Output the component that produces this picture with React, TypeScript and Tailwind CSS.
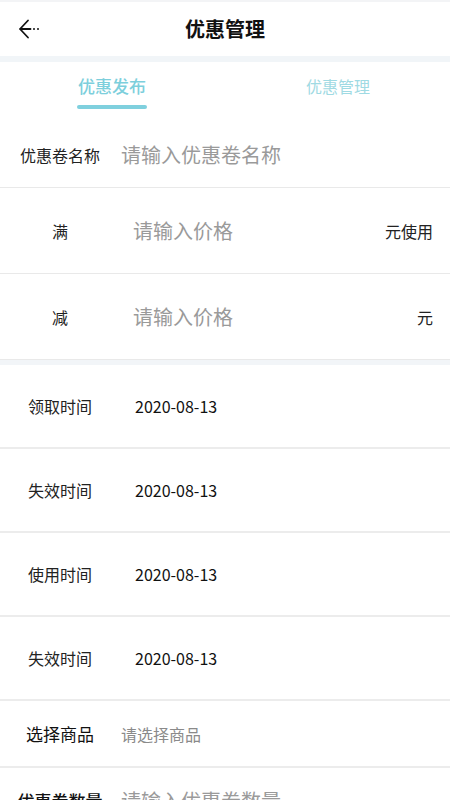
const font = { fontFamily: '"Noto Sans CJK SC", "Noto Sans", sans-serif' };

function BackArrow() {
  return (
    <svg width="24" height="22" viewBox="0 0 24 22" fill="none">
      <path d="M10 2.5L2 11L10 19.5" stroke="#111" strokeWidth="1.8" strokeLinecap="round" strokeLinejoin="round" />
      <path d="M2.5 11h10" stroke="#111" strokeWidth="1.8" strokeLinecap="round" />
      <circle cx="16" cy="11" r="1" fill="#111" />
      <circle cx="20" cy="11" r="1" fill="#111" />
    </svg>
  );
}

function InputRow({ label, placeholder, suffix, h, valueX }: { label: string; placeholder: string; suffix?: string; h: string; valueX: string }) {
  return (
    <div className={`flex items-center border-b border-[#e9e9e9] ${h}`}>
      <div className="w-[120px] text-center text-[16px] text-[#222]">{label}</div>
      <div className={`flex-1 text-[20px] text-[#9a9a9a] ${valueX}`}>{placeholder}</div>
      {suffix && <div className="pr-[17px] text-[16px] text-[#222]">{suffix}</div>}
    </div>
  );
}

function DateRow({ label, value }: { label: string; value: string }) {
  return (
    <div className="flex h-[84px] items-center border-b-2 border-[#ececec] pb-[1px]">
      <div className="w-[120px] text-center text-[16px] text-[#222]">{label}</div>
      <div className="pl-[15px] text-[16px] text-[#111]">{value}</div>
    </div>
  );
}

export default function App() {
  return (
    <div className="h-[800px] w-[450px] overflow-hidden bg-white" style={font}>
      {/* Header */}
      <div className="relative flex h-[56px] items-center justify-center border-t-2 border-[#f3f4f6] bg-white">
        <div className="absolute left-[18px] top-[16px]">
          <BackArrow />
        </div>
        <span className="text-[20px] font-bold text-[#111]">优惠管理</span>
      </div>
      <div className="h-[6px] bg-[#f1f5f8]" />

      {/* Tabs */}
      <div className="flex h-[60px]">
        <div className="flex flex-1 flex-col items-center pt-[11px]">
          <span className="text-[17px] font-medium text-[#7dcfdc]">优惠发布</span>
          <div className="mt-[6px] h-[4px] w-[70px] rounded-full bg-[#7fd0de]" />
        </div>
        <div className="flex flex-1 flex-col items-center pt-[12px] pl-[2px]">
          <span className="text-[16px] text-[#9fdae3]">优惠管理</span>
        </div>
      </div>

      {/* Name row */}
      <div className="flex h-[66px] items-center border-b border-[#e9e9e9]">
        <div className="w-[120px] text-center text-[16px] text-[#222]">优惠卷名称</div>
        <div className="pl-[1px] text-[20px] text-[#9a9a9a]">请输入优惠卷名称</div>
      </div>

      <InputRow label="满" placeholder="请输入价格" suffix="元使用" h="h-[86px]" valueX="pl-[13px]" />
      <InputRow label="减" placeholder="请输入价格" suffix="元" h="h-[86px]" valueX="pl-[13px]" />
      <div className="h-[5px] bg-[#f2f5f8]" />

      <DateRow label="领取时间" value="2020-08-13" />
      <DateRow label="失效时间" value="2020-08-13" />
      <DateRow label="使用时间" value="2020-08-13" />
      <DateRow label="失效时间" value="2020-08-13" />

      <div className="flex h-[67px] items-center border-b-2 border-[#ececec]">
        <div className="w-[120px] text-center text-[17px] text-[#111]">选择商品</div>
        <div className="pl-[1px] text-[16px] text-[#8a8a8a]">请选择商品</div>
      </div>

      <div className="flex h-[66px] items-center">
        <div className="w-[120px] text-center text-[17px] font-medium text-[#111]">优惠卷数量</div>
        <div className="pl-[1px] text-[20px] text-[#9a9a9a]">请输入优惠卷数量</div>
      </div>
    </div>
  );
}
